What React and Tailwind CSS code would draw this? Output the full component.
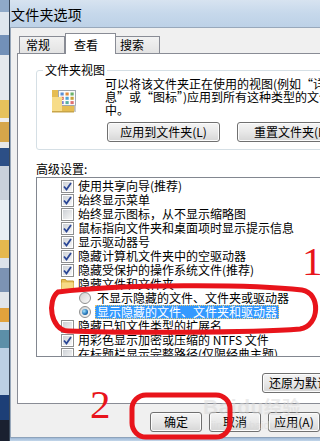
import React from "react";

// rows of the "高级设置" tree list
const rows = [
  { type: "check", checked: true, text: "使用共享向导(推荐)" },
  { type: "check", checked: true, text: "始终显示菜单" },
  { type: "check", checked: false, text: "始终显示图标，从不显示缩略图" },
  { type: "check", checked: true, text: "鼠标指向文件夹和桌面项时显示提示信息" },
  { type: "check", checked: true, text: "显示驱动器号" },
  { type: "check", checked: true, text: "隐藏计算机文件夹中的空驱动器" },
  { type: "check", checked: true, text: "隐藏受保护的操作系统文件(推荐)" },
  { type: "folder", text: "隐藏文件和文件夹" },
  { type: "radio", checked: false, text: "不显示隐藏的文件、文件夹或驱动器" },
  { type: "radio", checked: true, selected: true, text: "显示隐藏的文件、文件夹和驱动器" },
  { type: "check", checked: false, text: "隐藏已知文件类型的扩展名" },
  { type: "check", checked: true, text: "用彩色显示加密或压缩的 NTFS 文件" },
  { type: "check", checked: false, text: "在标题栏显示完整路径(仅限经典主题)" },
];

// blurred desktop showing at the left edge
const desktop = [
  ["h-[12px]", "bg-[#8fa9c8]"],
  ["h-[23px]", "bg-[#dfe6ee]"],
  ["h-[20px]", "bg-[#7290b8]"],
  ["h-[45px]", "bg-[#e4e8ed]"],
  ["h-[18px]", "bg-[#e6c25c]"],
  ["h-[4px]", "bg-[#eeeeee]"],
  ["h-[20px]", "bg-[#d6a64a]"],
  ["h-[6px]", "bg-[#e8e8e8]"],
  ["h-[18px]", "bg-[#2c4f86]"],
  ["h-[34px]", "bg-[#c9d1db]"],
  ["h-[40px]", "bg-[#e9eef3]"],
  ["h-[18px]", "bg-[#e5b84e]"],
  ["h-[10px]", "bg-[#dde3ea]"],
  ["h-[24px]", "bg-[#7c93b3]"],
  ["h-[16px]", "bg-[#e2e6ea]"],
  ["h-[14px]", "bg-[#e1a23c]"],
  ["h-[8px]", "bg-[#dde2e8]"],
  ["h-[18px]", "bg-[#5c8fa8]"],
  ["h-[47px]", "bg-[#bcd0e4]"],
  ["h-[25px]", "bg-[#1d3f77]"],
  ["h-[21px]", "bg-[#1a2030]"],
];

const Checkbox = ({ checked }) => (
  <span className="w-[13px] h-[13px] shrink-0 border border-[#8e8f8f] bg-white p-[1px] flex">
    <span className="flex-1 bg-linear-to-br from-[#cdd1d6] to-[#f7f7f7] flex items-center justify-center">
      {checked && (
        <svg width="9" height="9" viewBox="0 0 9 9">
          <path d="M1 4.5 L3.5 7.5 L8 1" fill="none" stroke="#2b4796" strokeWidth="1.8" />
        </svg>
      )}
    </span>
  </span>
);

const Radio = ({ checked }) => (
  <span className="w-[12px] h-[12px] shrink-0 rounded-full border border-[#8e8f8f] bg-linear-to-br from-[#d2d2d2] to-[#fbfbfb] flex items-center justify-center">
    {checked && (
      <span className="w-[6px] h-[6px] rounded-full bg-[radial-gradient(circle_at_35%_35%,#a6e4ff,#1f72b6_60%,#0d3f74)]" />
    )}
  </span>
);

const SmallFolder = () => (
  <svg width="13" height="12" viewBox="0 0 13 12" className="shrink-0">
    <path d="M0.5 1.5h4l1 1.5h7v8.5h-12z" fill="#e7bf55" stroke="#c49a35" />
    <path d="M0.5 4.5h12v7h-12z" fill="#f6da86" />
  </svg>
);

const BigFolder = () => (
  <svg width="27" height="27" viewBox="0 0 27 27">
    <path d="M1 3h8l2 2h13v19H1z" fill="#e6bd52" />
    <rect x="7.5" y="3.5" width="17" height="15" fill="#fdfdfd" stroke="#a0a8b2" />
    {[0, 1, 2].map((r) =>
      [0, 1, 2].map((c) => (
        <rect
          key={`${r}${c}`}
          x={9.5 + c * 5}
          y={5.5 + r * 4.3}
          width="3.2"
          height="3"
          fill={["#5b8fd6", "#e28b3a", "#6bb36a", "#d25b5b", "#4fa3d8", "#c9a33a", "#7d7dd0", "#58b0a0", "#e07070"][r * 3 + c]}
        />
      ))
    )}
    <path d="M1 10h10l1 2h-1v12H1z" fill="#f7dc89" />
    <path d="M1 24h22v1.5H1z" fill="#c8a548" />
    <path d="M24 18v7" stroke="#b9bcc0" strokeWidth="1.5" />
  </svg>
);

const Button = ({ children, className = "" }) => (
  <div
    className={`h-[20px] rounded-[3px] border border-[#707070] bg-linear-to-b from-[#f4f4f4] via-[#e8e8e8] to-[#d6d6d6] flex items-center justify-center whitespace-nowrap shadow-[inset_0_0_0_1px_#fcfcfc] ${className}`}
  >
    {children}
  </div>
);

export default function App() {
  return (
    <div className="relative w-[320px] h-[441px] overflow-hidden flex bg-[#f0f0f0] text-[12px] text-black font-['Noto_Sans_CJK_SC',sans-serif]">
      {/* desktop strip */}
      <div className="w-[10px] shrink-0 flex flex-col border-r border-[#3b4a5c]">
        {desktop.map(([h, bg], i) => (
          <div key={i} className={`${h} ${bg} shrink-0`} />
        ))}
      </div>

      {/* window */}
      <div className="flex-1 min-w-0 flex flex-col">
        <div className="h-[27px] shrink-0 bg-linear-to-b from-[#d7e3f0] via-[#c6d8eb] to-[#bdd1e7] flex items-center pl-[1px]">
          <span className="text-[14px] leading-[16px] tracking-[0.2px]">文件夹选项</span>
        </div>

        <div className="flex-1 flex flex-col border-t border-l border-[#98a8bb] bg-[#f0f0f0]">
          {/* tabs */}
          <div className="pl-[8px] pt-[5px] h-[25px] flex items-end">
            <div className="w-[46px] h-[17px] border border-b-0 border-[#898c95] bg-linear-to-b from-[#f2f2f2] to-[#e3e3e3] pl-[6px] leading-[16px] text-[12px]">
              常规
            </div>
            <div className="relative w-[51px] h-[21px] -mb-[1px] border border-b-0 border-[#898c95] bg-white pl-[8px] pt-[3px] leading-[16px] text-[12px] z-10">
              查看
            </div>
            <div className="w-[44px] h-[17px] border border-b-0 border-l-0 border-[#898c95] bg-linear-to-b from-[#f2f2f2] to-[#e3e3e3] pl-[4px] leading-[16px] text-[12px]">
              搜索
            </div>
          </div>

          {/* tab panel */}
          <div className="ml-[6px] w-[400px] h-[351px] shrink-0 border border-[#898c95] bg-white flex flex-col pl-[18px]">
            <fieldset className="mt-[9px] w-[380px] h-[87px] border border-[#d5dfe5] rounded-[3px] flex">
              <legend className="ml-[6px] px-[2px] leading-[14px]">文件夹视图</legend>
              <div className="flex">
                <div className="pl-[14px] pt-[10px] w-[68px] shrink-0">
                  <BigFolder />
                </div>
                <div className="flex flex-col">
                  <div className="leading-[13px] whitespace-nowrap">
                    <div>可以将该文件夹正在使用的视图(例如“详细信息</div>
                    <div>息”或“图标”)应用到所有这种类型的文件夹</div>
                    <div>中。</div>
                  </div>
                  <div className="mt-[6px] ml-[2px] flex gap-[17px]">
                    <Button className="w-[113px] border-[#3c7fb1] from-[#ecf7fd] via-[#dcf0fb] to-[#bfe3f7]">
                      应用到文件夹(L)
                    </Button>
                    <Button className="w-[113px] justify-start pl-[16px]">重置文件夹(R)</Button>
                  </div>
                </div>
              </div>
            </fieldset>

            <div className="mt-[12px] leading-[14px]">高级设置:</div>

            <div className="mt-[1px] w-[380px] h-[180px] shrink-0 border border-[#828790] bg-white overflow-hidden pt-[1px]">
              {rows.map((row, i) => (
                <div
                  key={i}
                  className={`h-[14px] flex items-center whitespace-nowrap leading-[14px] ${
                    row.type === "radio" ? "pl-[42px]" : "pl-[24px]"
                  }`}
                >
                  {row.type === "check" && <Checkbox checked={row.checked} />}
                  {row.type === "radio" && <Radio checked={row.checked} />}
                  {row.type === "folder" && <SmallFolder />}
                  {row.type === "radio" ? (
                    <span
                      className={`ml-[4px] px-[2px] h-[14px] ${
                        row.selected ? "bg-[#3399ff] text-white outline outline-dotted outline-[#e6c46e] -outline-offset-1" : ""
                      }`}
                    >
                      {row.text}
                    </span>
                  ) : (
                    <span className="ml-[4px]">{row.text}</span>
                  )}
                </div>
              ))}
            </div>

            <div className="mt-[16px] ml-[226px]">
              <Button className="w-[100px] justify-start pl-[6px]">还原为默认值(D)</Button>
            </div>
          </div>

          {/* dialog buttons */}
          <div className="mt-[8px] ml-[139px] flex gap-[7px]">
            <Button className="w-[73px] h-[19px]">确定</Button>
            <Button className="w-[73px] h-[19px]">取消</Button>
            <Button className="w-[73px] h-[19px]">应用(A)</Button>
          </div>
        </div>

        <div className="h-[4px] shrink-0 bg-linear-to-b from-[#9fb9d6] to-[#c3d6ea] border-t border-[#8ea3bb]" />
      </div>

      {/* Baidu watermark */}
      <div className="absolute left-[203px] top-[394px] flex flex-col items-start text-[#d8d8d8] opacity-50 pointer-events-none">
        <span className="text-[21px] leading-[24px] font-bold font-['Liberation_Sans',sans-serif] tracking-[0.5px]">
          Baidu<span className="font-['Noto_Sans_CJK_SC',sans-serif] text-[18px]">经验</span>
        </span>
        <span className="text-[11px] leading-[12px] ml-[8px] font-['Liberation_Sans',sans-serif]">jingyan.baidu.com</span>
      </div>

      {/* red annotations */}
      <svg className="absolute inset-0 pointer-events-none" width="320" height="441" viewBox="0 0 320 441">
        <path
          d="M58 292 C120 284 250 284 302 290 C321 293 320 326 300 329 C250 333 120 333 68 331 C50 330 47 300 58 292 Z"
          fill="none"
          stroke="#e8141b"
          strokeWidth="5"
        />
        <rect x="132" y="395" width="98" height="42" rx="14" fill="none" stroke="#e8141b" strokeWidth="5" />
      </svg>
      <span className="absolute left-[302px] top-[241px] text-[41px] leading-none font-['Liberation_Serif',serif] text-[#e8141b]">
        1
      </span>
      <span className="absolute left-[90px] top-[384px] text-[41px] leading-none font-['Liberation_Serif',serif] text-[#e8141b]">
        2
      </span>
    </div>
  );
}
